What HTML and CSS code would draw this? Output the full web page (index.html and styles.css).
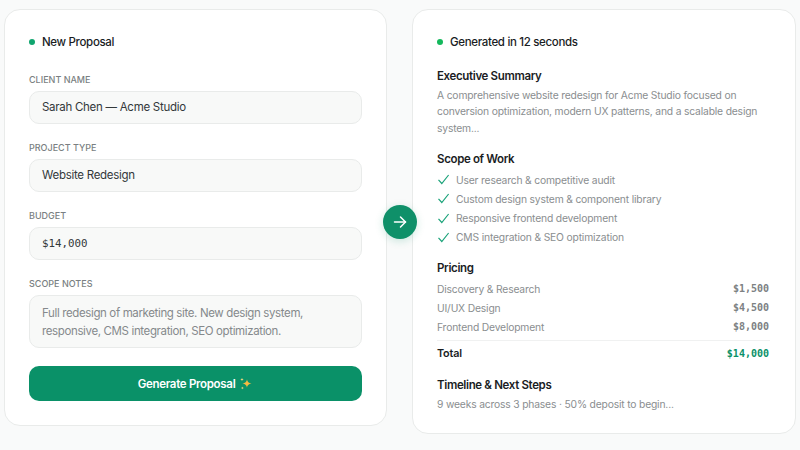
FILE: index.html
```html
<!DOCTYPE html>
<html>
<head>
	<title>Proposal Generator</title>
	<meta charset="utf-8">
	<link rel="stylesheet" href="styles.css">
</head>
<body>

	<main class="stage">

		<section class="card card-form">
			<h2 class="status"><span class="dot dot-teal"></span>New Proposal</h2>

			<div class="field">
				<div class="label">Client Name</div>
				<div class="input">Sarah Chen — Acme Studio</div>
			</div>

			<div class="field">
				<div class="label">Project Type</div>
				<div class="input">Website Redesign</div>
			</div>

			<div class="field">
				<div class="label">Budget</div>
				<div class="input mono">$14,000</div>
			</div>

			<div class="field">
				<div class="label">Scope Notes</div>
				<div class="input textarea">Full redesign of marketing site. New design system, responsive, CMS integration, SEO optimization.</div>
			</div>

			<button class="btn-generate">
				Generate Proposal
				<svg class="sparkle" width="14" height="14" viewBox="0 0 14 14">
					<path fill="#f5b942" d="M8 2.2c.5 2.7 1.400 3.600 4.500 4.300-3.100.7-4 1.600-4.500 4.300-.5-2.700-1.400-3.600-4.500-4.300C6.600 5.800 7.500 4.900 8 2.200z"/>
					<path fill="#f9d77e" d="M3 .8c.2 1.100.6 1.500 1.700 1.700C3.600 2.700 3.200 3.100 3 4.200 2.800 3.100 2.400 2.700 1.300 2.500 2.400 2.300 2.800 1.900 3 .8z"/>
					<path fill="#f9d77e" d="M3.400 9.400c.2 1 .5 1.300 1.500 1.500-1 .2-1.300.5-1.500 1.500-.2-1-.5-1.300-1.500-1.500 1-.2 1.300-.5 1.500-1.500z"/>
				</svg>
			</button>
		</section>

		<div class="arrow">
			<svg width="16" height="16" viewBox="0 0 16 16" fill="none" stroke="#fff" stroke-width="1.5" stroke-linecap="round" stroke-linejoin="round">
				<path d="M2.500 8h11"/>
				<path d="M8.500 3l5 5-5 5"/>
			</svg>
		</div>

		<section class="card card-result">
			<h2 class="status"><span class="dot dot-green"></span>Generated in 12 seconds</h2>

			<h3 class="title title-first">Executive Summary</h3>
			<p class="copy">A comprehensive website redesign for Acme Studio focused on conversion optimization, modern UX patterns, and a scalable design system...</p>

			<h3 class="title">Scope of Work</h3>
			<ul class="checks">
				<li><svg width="13" height="13" viewBox="0 0 13 13"><path d="M1.500 6.800l3.300 3.700 6.800-8.500"/></svg>User research &amp; competitive audit</li>
				<li><svg width="13" height="13" viewBox="0 0 13 13"><path d="M1.500 6.800l3.300 3.700 6.800-8.500"/></svg>Custom design system &amp; component library</li>
				<li><svg width="13" height="13" viewBox="0 0 13 13"><path d="M1.500 6.800l3.300 3.700 6.800-8.500"/></svg>Responsive frontend development</li>
				<li><svg width="13" height="13" viewBox="0 0 13 13"><path d="M1.500 6.800l3.300 3.700 6.800-8.500"/></svg>CMS integration &amp; SEO optimization</li>
			</ul>

			<h3 class="title title-pricing">Pricing</h3>
			<div class="price-row"><span>Discovery &amp; Research</span><span class="mono">$1,500</span></div>
			<div class="price-row"><span>UI/UX Design</span><span class="mono">$4,500</span></div>
			<div class="price-row"><span>Frontend Development</span><span class="mono">$8,000</span></div>
			<div class="price-row price-total"><span>Total</span><span class="mono">$14,000</span></div>

			<h3 class="title title-timeline">Timeline &amp; Next Steps</h3>
			<p class="copy">9 weeks across 3 phases · 50% deposit to begin...</p>
		</section>

	</main>

</body>
</html>
```

FILE: styles.css
```css
*,
*:before,
*:after {
	box-sizing: border-box;
}

body {
	background-color: #f9fafa;
	color: #1a1d1f;
	font-family: "Inter", "Noto Sans", sans-serif;
	height: 450px;
	margin: 0;
	overflow: hidden;
}

.stage {
	align-items: flex-start;
	display: flex;
	gap: 25px;
	padding: 9px 4px 0;
	position: relative;
}

.card {
	background-color: #ffffff;
	border: 1px solid #e9ebea;
	border-radius: 16px;
	padding: 24px;
}

.card-form {
	height: 417px;
	width: 383px;
}

.card-result {
	height: 425px;
	padding-right: 25px;
	width: 384px;
}

.status {
	align-items: center;
	display: flex;
	font-size: 11.5px;
	font-weight: 500;
	gap: 7px;
	height: 16px;
	letter-spacing: -0.33px;
	line-height: 16px;
	margin: 0;
}

.dot {
	border-radius: 50%;
	height: 6px;
	width: 6px;
}

.dot-teal {
	background-color: #10a56f;
}

.dot-green {
	background-color: #14b85c;
}

.field {
	margin-top: 18px;
}

.card-form .status + .field {
	margin-top: 24px;
}

.label {
	color: #7a7f82;
	font-size: 9px;
	font-weight: 500;
	height: 12px;
	line-height: 12px;
	margin-bottom: 5px;
	text-transform: uppercase;
}

.input {
	background-color: #f8f9f8;
	border: 1px solid #e9ebea;
	border-radius: 10px;
	color: #33383a;
	font-size: 11.5px;
	height: 33px;
	letter-spacing: -0.28px;
	line-height: 31px;
	padding: 0 12px;
}

.textarea {
	color: #85898c;
	height: 53px;
	letter-spacing: -0.37px;
	line-height: 18px;
	padding: 8px 12px;
}

.mono {
	font-family: "DejaVu Sans Mono", "Liberation Mono", monospace;
	letter-spacing: 0;
}

.input.mono {
	font-size: 10.8px;
}

.btn-generate {
	align-items: center;
	background-color: #0a9168;
	border: 0;
	border-radius: 10px;
	color: #ffffff;
	display: flex;
	font-family: inherit;
	font-size: 11.5px;
	font-weight: 600;
	gap: 4px;
	height: 35px;
	justify-content: center;
	letter-spacing: -0.3px;
	margin-top: 18px;
	padding: 0;
	width: 100%;
}

.arrow {
	align-items: center;
	background-color: #0f9069;
	border-radius: 50%;
	box-shadow: 0 2px 8px rgba(15, 144, 105, 0.2);
	display: flex;
	height: 34px;
	justify-content: center;
	left: 383px;
	position: absolute;
	top: 205px;
	width: 34px;
}

.title {
	color: #1a1d1f;
	font-size: 11.5px;
	font-weight: 600;
	height: 16px;
	letter-spacing: -0.35px;
	line-height: 16px;
	margin: 15px 0 3px;
}

.title-first {
	margin-top: 18px;
}

.title-pricing {
	margin-top: 13px;
}

.title-timeline {
	margin-top: 11px;
}

.copy {
	color: #8a8e90;
	font-size: 10.3px;
	letter-spacing: -0.17px;
	line-height: 16.3px;
	margin: 0;
}

.checks {
	list-style: none;
	margin: 0;
	padding: 0;
}

.checks li {
	align-items: center;
	color: #8a8e90;
	display: flex;
	font-size: 10.3px;
	gap: 6px;
	height: 19.300px;
	letter-spacing: -0.17px;
}

.checks svg {
	fill: none;
	stroke: #1ba37a;
	stroke-width: 1.2;
}

.price-row {
	align-items: center;
	color: #8a8e90;
	display: flex;
	font-size: 10.3px;
	height: 19px;
	justify-content: space-between;
	letter-spacing: -0.17px;
	padding-right: 1px;
}

.price-row .mono {
	color: #7d8183;
	font-size: 10px;
	font-weight: 700;
}

.price-total {
	border-top: 1px solid #f0f1f1;
	color: #1a1d1f;
	font-size: 10.8px;
	font-weight: 600;
	height: 26px;
	margin-top: 4px;
}

.price-row.price-total .mono {
	color: #0a9168;
}
```
